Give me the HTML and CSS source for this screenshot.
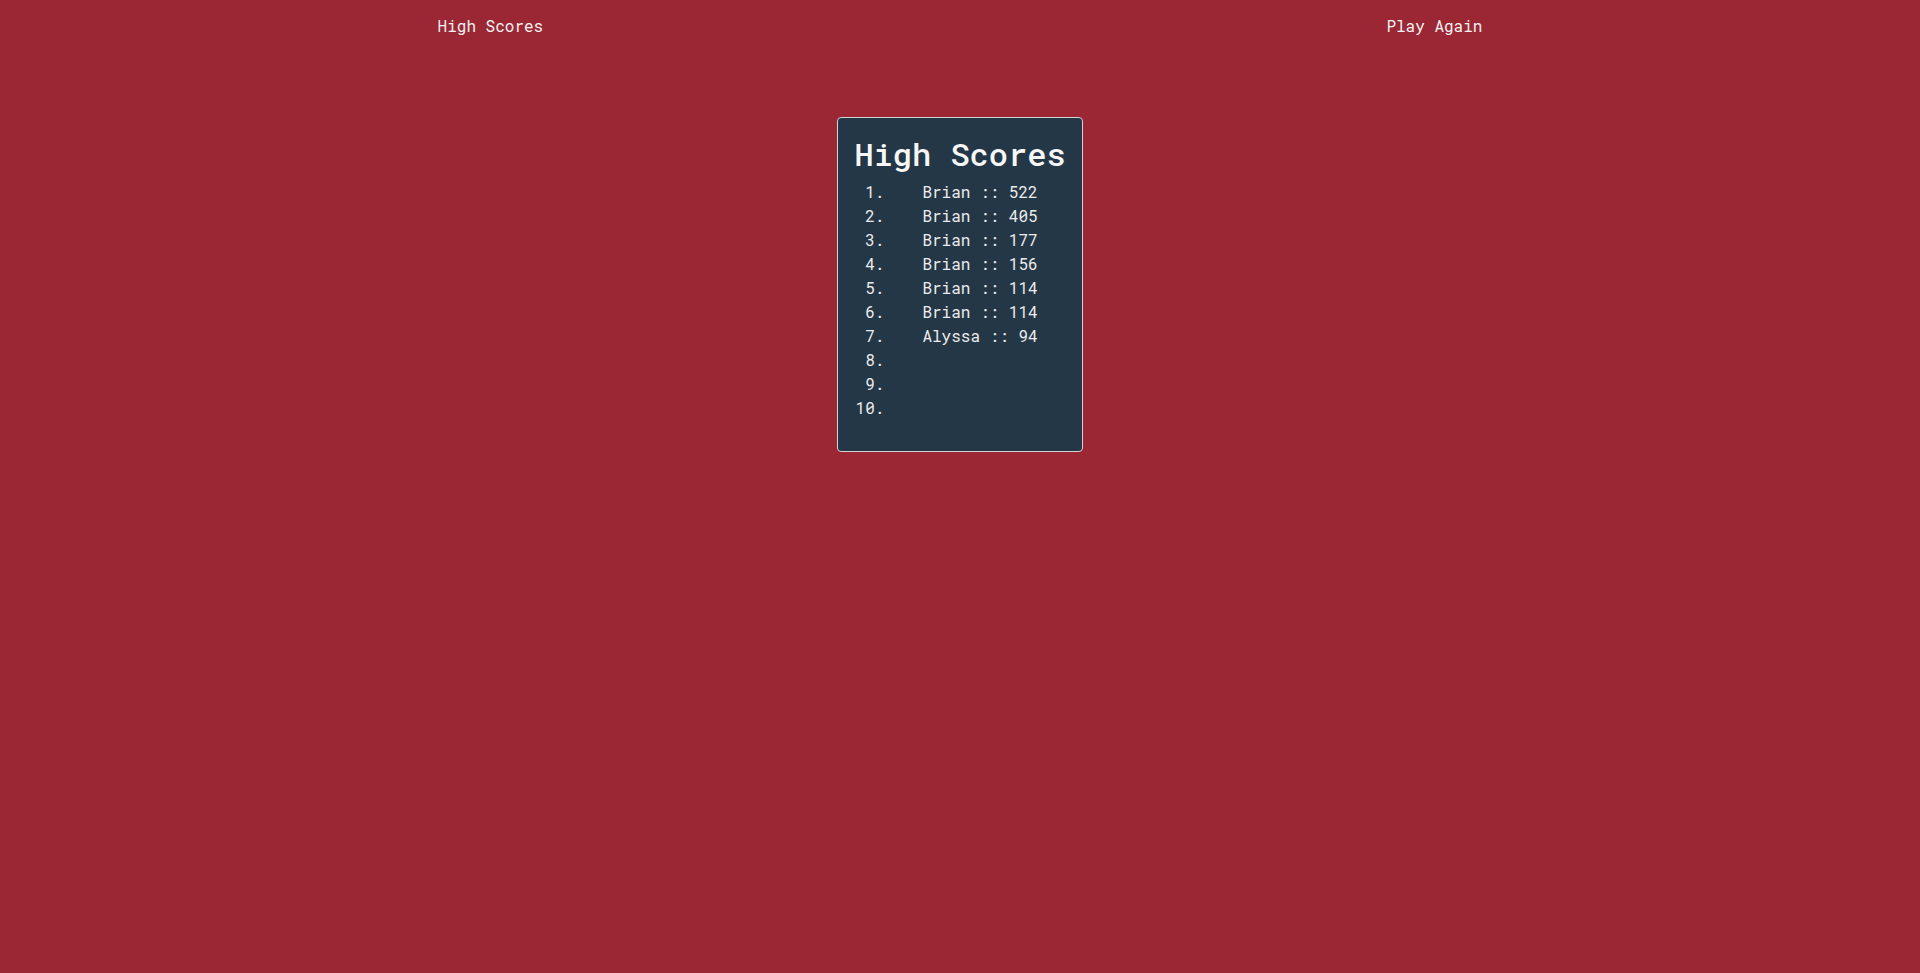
FILE: index.html
```html
<!DOCTYPE html>
<html lang="en">
<head>
<meta charset="utf-8">
<title>High Scores</title>
<link rel="stylesheet" href="styles.css">
</head>
<body>
<header class="top-nav">
  <a class="nav-link" href="#">High Scores</a>
  <a class="nav-link" href="#">Play Again</a>
</header>
<main class="stage">
  <section class="score-card">
    <h1 class="score-title">High Scores</h1>
    <ol class="score-list">
      <li class="score-row"><span class="entry">Brian :: 522</span></li>
      <li class="score-row"><span class="entry">Brian :: 405</span></li>
      <li class="score-row"><span class="entry">Brian :: 177</span></li>
      <li class="score-row"><span class="entry">Brian :: 156</span></li>
      <li class="score-row"><span class="entry">Brian :: 114</span></li>
      <li class="score-row"><span class="entry">Brian :: 114</span></li>
      <li class="score-row"><span class="entry">Alyssa :: 94</span></li>
      <li class="score-row"><span class="entry"></span></li>
      <li class="score-row"><span class="entry"></span></li>
      <li class="score-row"><span class="entry"></span></li>
    </ol>
  </section>
</main>
</body>
</html>
```

FILE: styles.css
```css
html, body {
  margin: 0;
  padding: 0;
}

body {
  background: #9b2634;
  color: #f2f2f2;
  font-family: "Roboto Mono", "Liberation Mono", "DejaVu Sans Mono", monospace;
  font-size: 16px;
  min-height: 973px;
}

.top-nav {
  display: flex;
  justify-content: space-around;
  padding: 14px 16px 16px;
  line-height: 24px;
}

.nav-link {
  color: #f2f2f2;
  text-decoration: none;
}

.stage {
  display: flex;
  justify-content: center;
  padding-top: 63px;
}

.score-card {
  background: #243747;
  border: 1px solid #d4d4d4;
  border-radius: 4px;
  padding: 16px 16px 31px;
}

.score-title {
  margin: 0;
  font-size: 32px;
  line-height: 40px;
  font-weight: 500;
  color: #f7f7f7;
}

.score-list {
  list-style: none;
  margin: 6px 0 0;
  padding: 0;
  counter-reset: rank;
}

.score-row {
  display: flex;
  line-height: 24px;
  height: 24px;
  counter-increment: rank;
  color: #ececec;
}

.score-row::before {
  content: counter(rank) ".";
  width: 30px;
  text-align: right;
  flex: none;
}

.entry {
  margin-left: 38px;
  white-space: pre;
}
```
